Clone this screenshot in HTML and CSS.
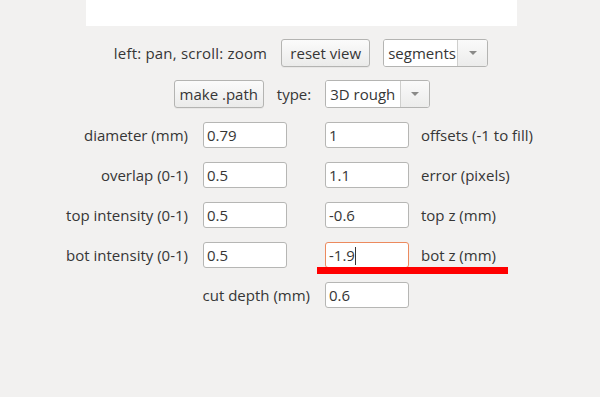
FILE: index.html
```html
<!DOCTYPE html>
<html>
<head>
<meta charset="utf-8">
<link rel="stylesheet" href="styles.css">
</head>
<body>
<div class="page">
  <div class="canvas"></div>
  <div class="row row-1">
    <span class="text">left: pan, scroll: zoom</span>
    <button class="btn btn-reset">reset view</button>
    <div class="select select-seg">
      <span class="select-value">segments</span>
      <span class="select-arrow"><span class="tri"></span></span>
    </div>
  </div>
  <div class="row row-2">
    <button class="btn btn-make">make .path</button>
    <span class="text type-label">type:</span>
    <div class="select select-type">
      <span class="select-value">3D rough</span>
      <span class="select-arrow"><span class="tri"></span></span>
    </div>
  </div>
  <div class="params">
    <span class="lbl-l">diameter (mm)</span>
    <div class="field c2">0.79</div>
    <div class="field c4">1</div>
    <span class="lbl-r">offsets (-1 to fill)</span>

    <span class="lbl-l">overlap (0-1)</span>
    <div class="field c2">0.5</div>
    <div class="field c4">1.1</div>
    <span class="lbl-r">error (pixels)</span>

    <span class="lbl-l">top intensity (0-1)</span>
    <div class="field c2">0.5</div>
    <div class="field c4">-0.6</div>
    <span class="lbl-r">top z (mm)</span>

    <span class="lbl-l">bot intensity (0-1)</span>
    <div class="field c2">0.5</div>
    <div class="field c4 focused">-1.9<span class="caret"></span></div>
    <span class="lbl-r">bot z (mm)</span>

    <span class="lbl-l lbl-cut">cut depth (mm)</span>
    <div class="field c4">0.6</div>
  </div>
  <div class="annot"></div>
</div>
</body>
</html>
```

FILE: styles.css
```css
html, body {
  margin: 0;
  padding: 0;
  background: #f2f1f0;
}
body {
  font-family: "Open Sans", "DejaVu Sans", sans-serif;
  font-size: 15px;
  color: #363636;
  width: 600px;
  height: 397px;
  overflow: hidden;
}
.page {
  position: relative;
  display: flex;
  flex-direction: column;
  align-items: center;
  width: 600px;
  height: 397px;
}
.canvas {
  width: 431px;
  height: 26px;
  background: #ffffff;
  margin-left: 3px;
}
.row {
  display: flex;
  align-items: center;
  height: 28px;
}
.row-1 {
  margin-top: 13px;
  margin-left: 2px;
}
.row-1 .text {
  letter-spacing: 0.2px;
}
.row-2 {
  margin-top: 13px;
  margin-left: 4px;
}
.text {
  white-space: nowrap;
  line-height: 28px;
}
.btn {
  font: inherit;
  color: #363636;
  height: 28px;
  padding: 0 4px;
  border: 1px solid #b4b4b2;
  border-radius: 3px;
  background: linear-gradient(#fbfbfb, #ebebea);
  box-shadow: 0 1px 0 rgba(0,0,0,0.04);
  white-space: nowrap;
  line-height: 24px;
}
.btn-reset {
  margin-left: 14px;
  width: 89px;
}
.btn-make {
  width: 90px;
}
.type-label {
  margin-left: 13px;
}
.select {
  display: flex;
  height: 28px;
  box-sizing: border-box;
  border: 1px solid #b4b4b2;
  border-radius: 3px;
  overflow: hidden;
  background: #fff;
}
.select-seg {
  margin-left: 13px;
  width: 105px;
}
.select-type {
  margin-left: 14px;
  width: 105px;
}
.select-value {
  flex: 1;
  overflow: hidden;
  white-space: nowrap;
  padding-left: 4px;
  line-height: 26px;
  background: #fff;
}
.select-arrow {
  width: 29px;
  flex: none;
  border-left: 1px solid #cfcfcd;
  background: linear-gradient(#fafafa, #ececeb);
  display: flex;
  align-items: center;
  justify-content: center;
}
.select-type .select-arrow {
  width: 28px;
}
.tri {
  width: 0;
  height: 0;
  border-left: 4px solid transparent;
  border-right: 4px solid transparent;
  border-top: 4px solid #8a8a88;
}
.params {
  margin-top: 14px;
  display: grid;
  grid-template-columns: 203px 84px 38px 84px 1fr;
  grid-auto-rows: 26px;
  row-gap: 14px;
  width: 600px;
  align-items: center;
}
.lbl-l {
  grid-column: 1;
  justify-self: end;
  margin-right: 15px;
  white-space: nowrap;
}
.lbl-cut {
  grid-column: 1 / 4;
}
.c2 { grid-column: 2; }
.c4 { grid-column: 4; }
.lbl-r {
  grid-column: 5;
  padding-left: 12px;
  white-space: nowrap;
}
.field {
  box-sizing: border-box;
  height: 26px;
  border: 1px solid #b6b6b4;
  border-radius: 3px;
  background: #fff;
  padding-left: 3px;
  line-height: 24px;
  white-space: nowrap;
}
.field.focused {
  border-color: #ec8a5e;
}
.caret {
  display: inline-block;
  width: 1px;
  height: 18px;
  background: #363636;
  vertical-align: -4px;
}
.annot {
  position: absolute;
  left: 317px;
  top: 267px;
  width: 191px;
  height: 7px;
  background: #ff0000;
}
```
